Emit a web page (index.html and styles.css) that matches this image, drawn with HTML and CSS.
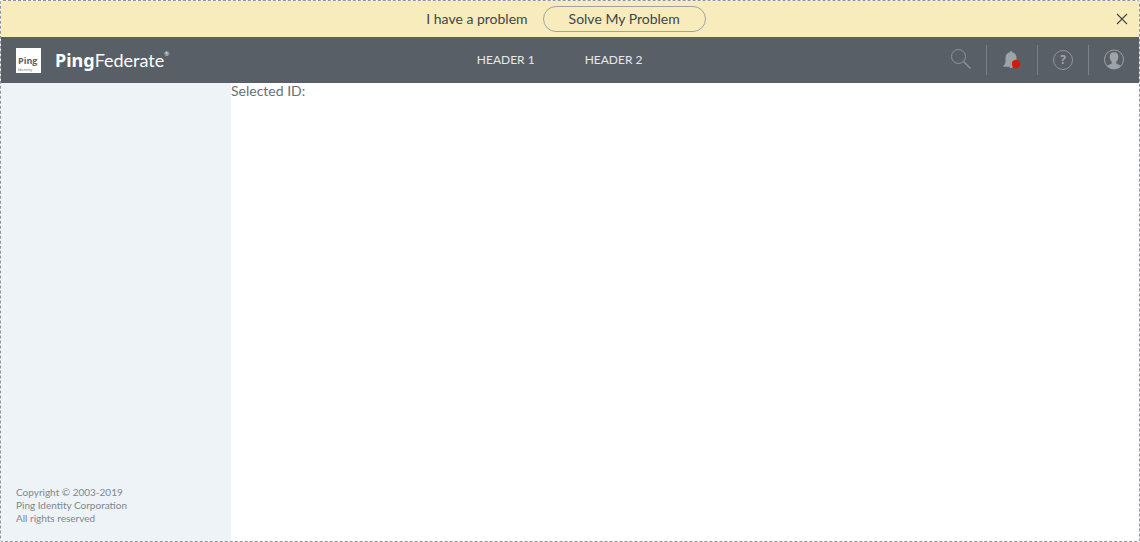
FILE: index.html
```html
<!DOCTYPE html>
<html lang="en">
<head>
<meta charset="utf-8">
<title>PingFederate</title>
<link rel="stylesheet" href="styles.css">
</head>
<body>
<div class="app">
  <div class="banner" role="status">
    <div class="banner-content">
      <span>I have a problem</span>
      <button class="banner-action" type="button">Solve My Problem</button>
    </div>
    <button class="banner-close" type="button" aria-label="Close">
      <svg width="12" height="12" viewBox="0 0 12 12"><path d="M1 1l10 10M11 1L1 11" fill="none" stroke="#3d454d" stroke-width="1.1"/></svg>
    </button>
  </div>
  <header class="header">
    <a class="brand" href="#">
      <span class="logo"><span class="logo-name">Ping</span><span class="logo-sub">Identity</span></span>
      <span class="product"><b class="product-bold">Ping</b><span>Federate</span><span class="product-mark">®</span></span>
    </a>
    <nav class="nav">
      <a href="#">HEADER 1</a>
      <a href="#">HEADER 2</a>
    </nav>
    <div class="tools">
      <button class="tool" type="button" aria-label="Search">
        <svg width="22" height="22" viewBox="0 0 22 22" fill="none" stroke="#8f949b"><circle cx="8.500" cy="7.500" r="7"/><path d="M13.500 12.500l7 7" stroke-width="1.400"/></svg>
      </button>
      <button class="tool" type="button" aria-label="Notifications">
        <svg width="22" height="22" viewBox="0 0 22 22"><path fill="#9ea3aa" d="M10 2c.8 0 1.200.6 1.200 1.300 2.800.6 4.300 2.700 4.300 5.500v3.700c0 2.200.6 3.200 2 4v1.200H2.500v-1.200c1.400-.8 2-1.800 2-4V8.800c0-2.800 1.500-4.900 4.300-5.500C8.800 2.600 9.200 2 10 2zM8.500 17.500h3c0 1-.6 1.500-1.500 1.500s-1.500-.5-1.500-1.500z"/><circle cx="15" cy="15" r="4.200" fill="#d31b08"/></svg>
      </button>
      <button class="tool" type="button" aria-label="Help">
        <span class="help">?</span>
      </button>
      <button class="tool" type="button" aria-label="Account">
        <svg width="22" height="22" viewBox="0 0 22 22"><circle cx="11" cy="10.500" r="9.500" fill="none" stroke="#9ea3aa"/><path fill="#9ea3aa" d="M11 3.200c3 0 4.500 1.900 4.300 4.700-.1 2.100-.9 3.600-2 4.800v1.600c.2 1 3.600 1.200 4.400 2.700C16.200 18.900 13.800 20 11 20s-5.200-1.100-6.700-3c.8-1.500 4.200-1.700 4.400-2.700v-1.600c-1.100-1.200-1.900-2.700-2-4.800C6.500 5.100 8 3.200 11 3.200z"/></svg>
      </button>
    </div>
  </header>
  <div class="body">
    <aside class="sidebar">
      <p class="copyright">Copyright © 2003-2019<br>Ping Identity Corporation<br>All rights reserved</p>
    </aside>
    <main class="content">Selected ID:</main>
  </div>
</div>
</body>
</html>
```
FILE: styles.css
```css
* {
  box-sizing: border-box;
}

body {
  margin: 0;
  font-family: Lato, sans-serif;
  font-size: 14px;
  line-height: 16px;
  color: #686f77;
  background: #fff;
}

button {
  padding: 0;
  border: 0;
  background: none;
  font: inherit;
  color: inherit;
  cursor: pointer;
}

a {
  color: inherit;
  text-decoration: none;
}

svg {
  display: block;
}

.app {
  display: flex;
  flex-direction: column;
  min-height: 100vh;
  border: 1px dashed #8f9399;
  border-radius: 3px;
  overflow: hidden;
}

.banner {
  display: flex;
  align-items: center;
  height: 36px;
  padding: 0 11px 0 15px;
  background: #f9ecbc;
  color: #3d454d;
}

.banner-content {
  display: flex;
  flex: 1;
  align-items: center;
  justify-content: center;
  gap: 15px;
}

.banner-action {
  height: 26px;
  padding: 0 25px;
  border: 1px solid #9da2a8;
  border-radius: 13px;
}

.header {
  display: flex;
  align-items: center;
  justify-content: space-between;
  height: 46px;
  padding: 0 14px 0 15px;
  background: #585f66;
  color: #fff;
}

.brand {
  display: flex;
  align-items: center;
  gap: 14px;
}

.logo {
  display: flex;
  flex-direction: column;
  justify-content: flex-end;
  align-items: flex-start;
  width: 25px;
  height: 25px;
  padding: 0 2px 1px;
  background: #fff;
  color: #585f66;
  font-family: "Open Sans", sans-serif;
}

.logo-name {
  font-size: 9px;
  font-weight: 700;
  line-height: 12px;
}

.logo-sub {
  font-size: 4px;
  line-height: 5px;
}

.product {
  display: flex;
  align-items: baseline;
  font-size: 18px;
  line-height: 24px;
}

.product-bold {
  font-family: "Noto Sans", sans-serif;
}

.product-mark {
  align-self: flex-start;
  font-size: 6px;
  line-height: 12px;
}

.nav {
  display: flex;
  gap: 50px;
  font-size: 12px;
  font-weight: 400;
  color: #e6e8ea;
}

.tools {
  display: flex;
}

.tool {
  display: flex;
  align-items: center;
  justify-content: center;
  height: 30px;
  padding: 0 14px;
  border-left: 1px solid #7c8289;
}

.tool:first-child {
  padding-left: 0;
  border-left: 0;
}

.tool:last-child {
  padding-right: 0;
}

.help {
  width: 20px;
  height: 20px;
  margin: 0 1px;
  border: 1px solid #8f949b;
  border-radius: 50%;
  color: #9ea3aa;
  font-family: "Open Sans", sans-serif;
  font-size: 12px;
  font-weight: 700;
  line-height: 18px;
}

.body {
  display: flex;
  flex: 1;
}

.sidebar {
  display: flex;
  align-items: flex-end;
  width: 230px;
  padding: 16px 15px;
  background: #eef3f7;
}

.copyright {
  margin: 0;
  font-size: 10px;
  line-height: 13px;
  color: #80868c;
}

.content {
  flex: 1;
}
```
